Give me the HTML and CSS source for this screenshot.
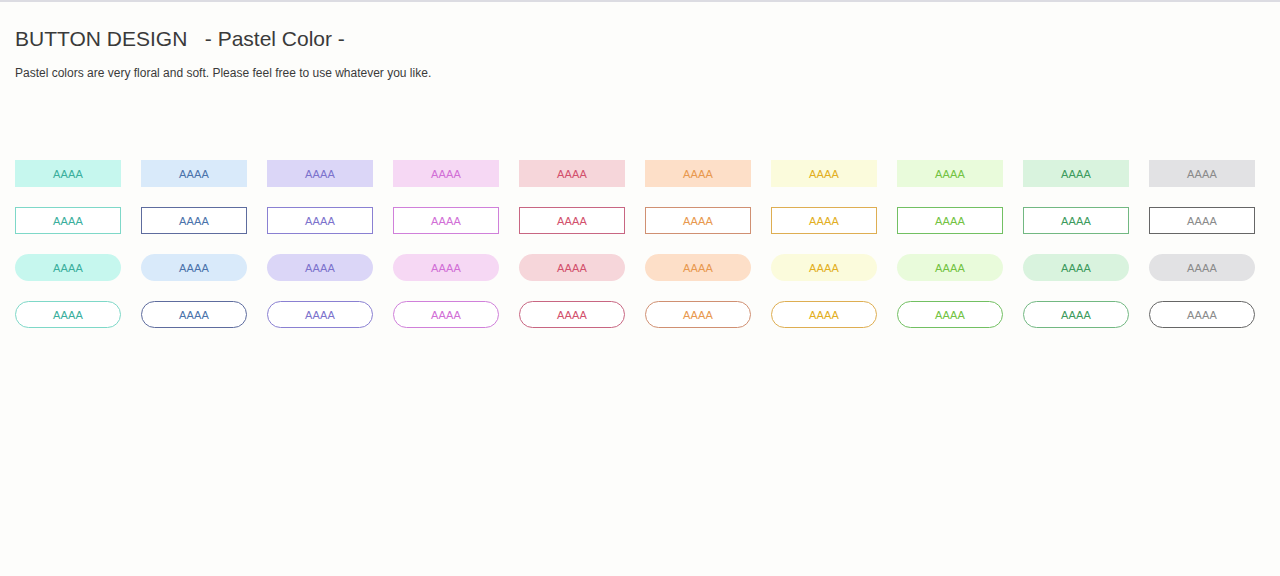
FILE: index.html
```html
<!DOCTYPE html>
<html lang="en">
<head>
<meta charset="utf-8">
<title>Button Design - Pastel Color</title>
<link rel="stylesheet" href="styles.css">
</head>
<body>
<main class="page">
  <h1 class="title">BUTTON DESIGN&nbsp;&nbsp; - Pastel Color -</h1>
  <p class="lead">Pastel colors are very floral and soft. Please feel free to use whatever you like.</p>
  <div class="grid">
    <a class="btn fill c1">AAAA</a><a class="btn fill c2">AAAA</a><a class="btn fill c3">AAAA</a><a class="btn fill c4">AAAA</a><a class="btn fill c5">AAAA</a><a class="btn fill c6">AAAA</a><a class="btn fill c7">AAAA</a><a class="btn fill c8">AAAA</a><a class="btn fill c9">AAAA</a><a class="btn fill c10">AAAA</a>
    <a class="btn line c1">AAAA</a><a class="btn line c2">AAAA</a><a class="btn line c3">AAAA</a><a class="btn line c4">AAAA</a><a class="btn line c5">AAAA</a><a class="btn line c6">AAAA</a><a class="btn line c7">AAAA</a><a class="btn line c8">AAAA</a><a class="btn line c9">AAAA</a><a class="btn line c10">AAAA</a>
    <a class="btn fill round c1">AAAA</a><a class="btn fill round c2">AAAA</a><a class="btn fill round c3">AAAA</a><a class="btn fill round c4">AAAA</a><a class="btn fill round c5">AAAA</a><a class="btn fill round c6">AAAA</a><a class="btn fill round c7">AAAA</a><a class="btn fill round c8">AAAA</a><a class="btn fill round c9">AAAA</a><a class="btn fill round c10">AAAA</a>
    <a class="btn line round c1">AAAA</a><a class="btn line round c2">AAAA</a><a class="btn line round c3">AAAA</a><a class="btn line round c4">AAAA</a><a class="btn line round c5">AAAA</a><a class="btn line round c6">AAAA</a><a class="btn line round c7">AAAA</a><a class="btn line round c8">AAAA</a><a class="btn line round c9">AAAA</a><a class="btn line round c10">AAAA</a>
  </div>
</main>
</body>
</html>
```
FILE: styles.css
```css
html, body {
  margin: 0;
  padding: 0;
}
body {
  background: #fdfdfb;
  border-top: 2px solid #dcdce2;
  font-family: "Liberation Sans", Arial, sans-serif;
  color: #333;
}
.page {
  padding: 25px 15px 0 15px;
}
.title {
  margin: 0;
  font-size: 21px;
  font-weight: normal;
  line-height: 24px;
  color: #3a3a3a;
}
.lead {
  margin: 14px 0 0 0;
  font-size: 12px;
  line-height: 16px;
  color: #3a3a3a;
}
.grid {
  margin-top: 79px;
  display: grid;
  grid-template-columns: repeat(10, 106px);
  grid-auto-rows: 27px;
  column-gap: 20px;
  row-gap: 20px;
}
.btn {
  display: flex;
  align-items: center;
  justify-content: center;
  box-sizing: border-box;
  font-size: 11px;
  letter-spacing: 0.2px;
  text-decoration: none;
  cursor: pointer;
}
.round { border-radius: 14px; }
.line {
  background: #ffffff;
  border: 1px solid;
}

.c1 { color: #3aae9c; }
.c2 { color: #4a72aa; }
.c3 { color: #7c72cc; }
.c4 { color: #d16ed6; }
.c5 { color: #d2506c; }
.c6 { color: #e8984e; }
.c7 { color: #e2ae1e; }
.c8 { color: #72c242; }
.c9 { color: #3c9a5c; }
.c10 { color: #8a8a8a; }

.fill.c1 { background: #c6f7ee; }
.fill.c2 { background: #d9eafa; }
.fill.c3 { background: #dbd6f7; }
.fill.c4 { background: #f6d8f4; }
.fill.c5 { background: #f6d6da; }
.fill.c6 { background: #fddfc8; }
.fill.c7 { background: #fbfbdc; }
.fill.c8 { background: #e9fbdb; }
.fill.c9 { background: #d9f3de; }
.fill.c10 { background: #e2e2e4; }

.line.c1 { border-color: #7ed8c8; }
.line.c2 { border-color: #5e6c9e; }
.line.c3 { border-color: #8a80d2; }
.line.c4 { border-color: #d080da; }
.line.c5 { border-color: #c86682; }
.line.c6 { border-color: #d09072; }
.line.c7 { border-color: #deae52; }
.line.c8 { border-color: #72c062; }
.line.c9 { border-color: #72b882; }
.line.c10 { border-color: #666666; }
```
